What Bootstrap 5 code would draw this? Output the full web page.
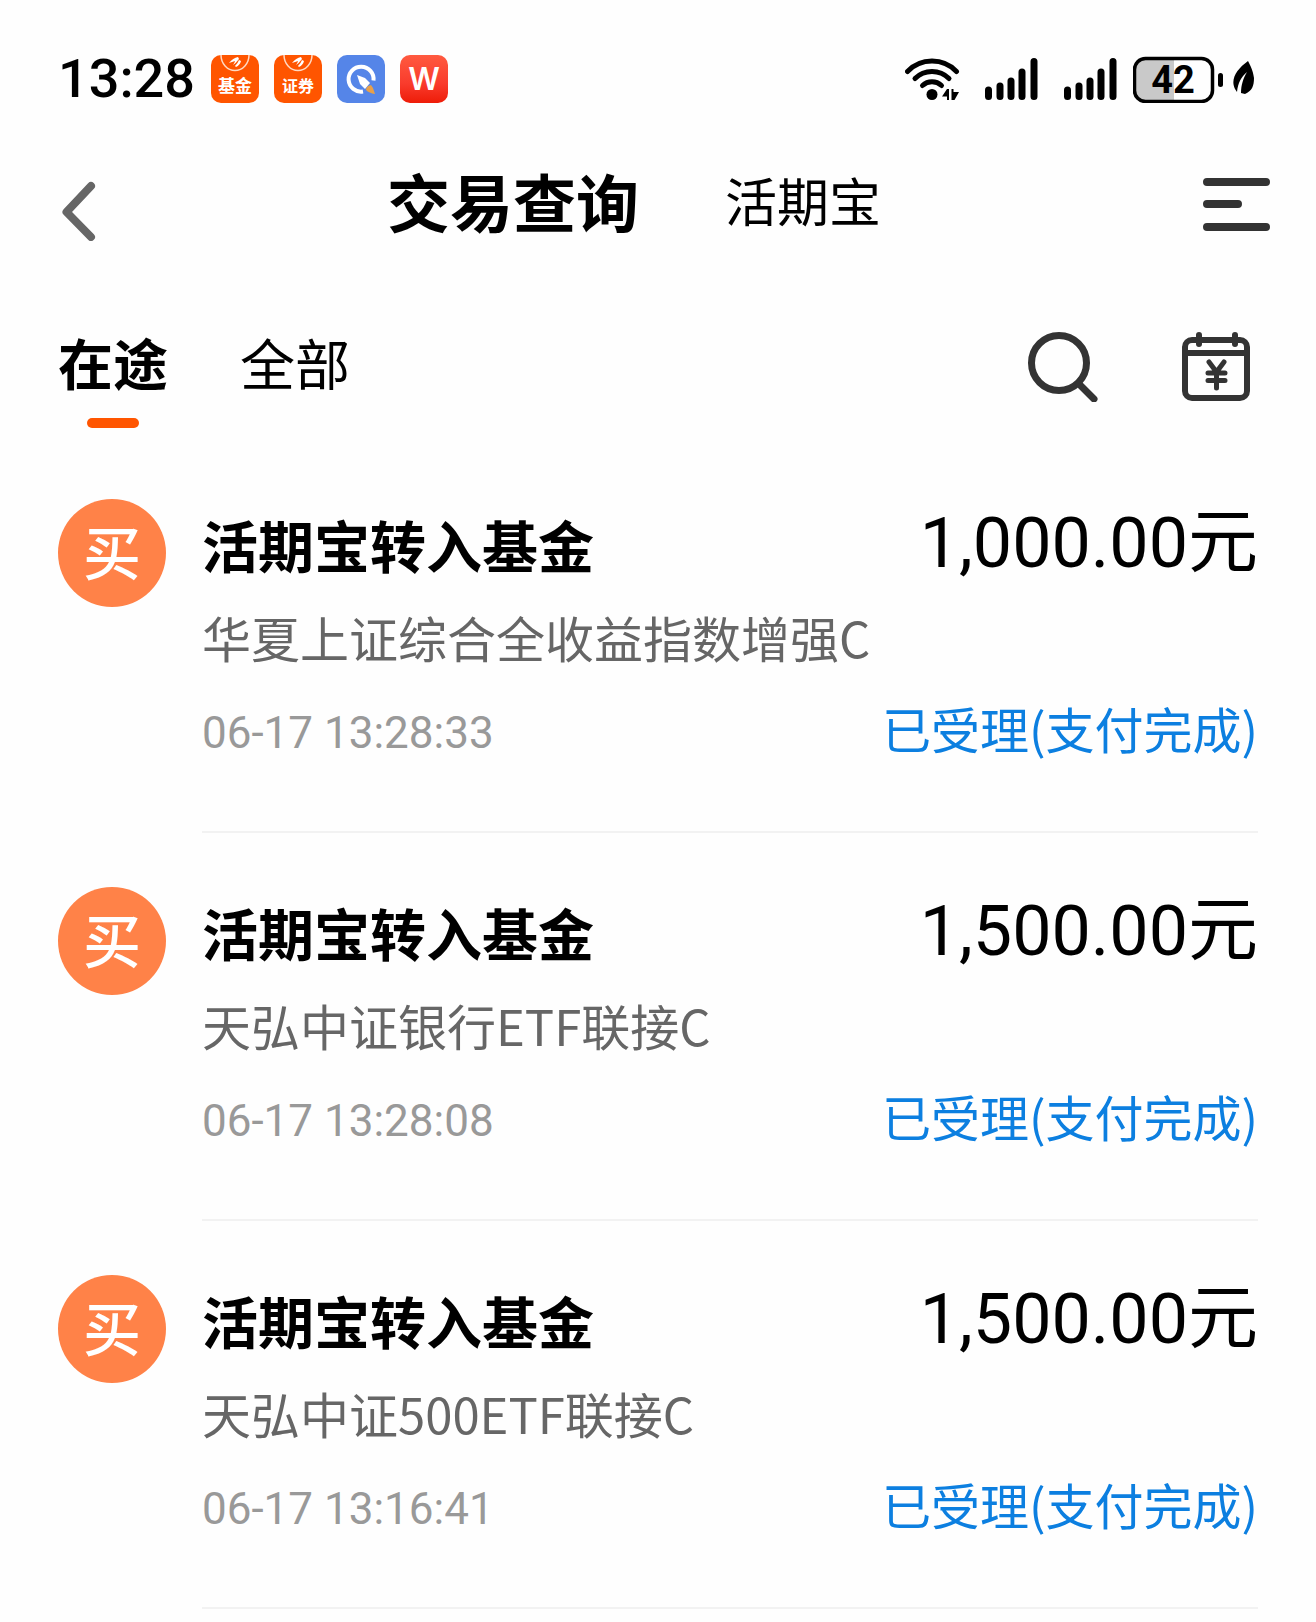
<!DOCTYPE html>
<html lang="zh-CN">
<head>
<meta charset="utf-8">
<meta name="viewport" content="width=device-width, initial-scale=1">
<title>交易查询</title>
<link href="https://cdn.jsdelivr.net/npm/bootstrap@5.3.0/dist/css/bootstrap.min.css" rel="stylesheet">
<style>
body { font-family: "Noto Sans CJK SC", sans-serif; background: #fefefe; color: #000; }
svg { display: block; flex: none; }
button { color: #333; background: none; border: 0; padding: 0; }
.page-x { padding-left: 58px; padding-right: 58px; }
.clock, .trade-sum, .trade-time, .battery-text { font-family: Roboto, "Noto Sans CJK SC", sans-serif; }

.status-bar { height: 128px; padding-top: 48px; }
.clock { font-size: 54px; line-height: 62px; font-weight: 500; }
.app-icons { gap: 15px; margin: 7px 0 0 16px; }
.sys-icons { margin-top: 7px; }

.top-nav { height: 140px; padding-left: 58px; padding-right: 44px; }
.back-btn { color: #666; padding-top: 26px; }
.menu-btn { padding-top: 12px; padding-left: 32px; }
.nav-titles { gap: 86px; padding-top: 4px; }
.nav-titles a { color: #000; text-decoration: none; font-size: 52px; line-height: 72px; }
.nav-titles a.active { font-size: 63px; font-weight: 700; }

.tab-row { padding-top: 57px; padding-bottom: 17px; }
.tab-list { gap: 72px; }
.tab-list button { color: #000; font-size: 55px; line-height: 72px; }
.tab-list button::after { content: ""; display: block; width: 52px; height: 10px; margin: 21px auto 0; border-radius: 5px; }
.tab-list button.active { font-weight: 700; }
.tab-list button.active::after { background: #ff5500; }
.tab-tools { gap: 82px; padding-top: 7px; margin-right: 7px; }

.trade { padding-top: 54px; gap: 36px; }
.buy-mark { width: 108px; height: 108px; padding-bottom: 6px; border-radius: 50%; background: #ff8248; color: #fff; font-size: 58px; line-height: 58px; font-weight: 500; flex: none; }
.trade-body { padding-top: 7px; padding-bottom: 65px; border-bottom: 2px solid #f2f2f2; }
.trade-title { font-size: 56px; line-height: 76px; font-weight: 700; }
.trade-sum { font-size: 70px; line-height: 74px; }
.trade-fund { font-size: 49px; line-height: 64px; margin-top: 23px; color: #666; }
.trade-foot { margin-top: 31px; }
.trade-time { font-size: 44px; line-height: 66px; color: #999; }
.trade-state { font-size: 49px; line-height: 56px; color: #0c7fe0; }
</style>
</head>
<body>
<header>
  <div class="status-bar page-x d-flex justify-content-between align-items-start">
    <div class="d-flex align-items-start">
      <div class="clock">13:28</div>
      <div class="app-icons d-flex">
        <svg width="48" height="48" viewBox="0 0 48 48"><rect width="48" height="48" rx="10" fill="#ff5500"/><path d="M10 0a14 15.500 0 0 0 28 0" fill="none" stroke="#ffd9c2" stroke-width="1.500"/><path d="M18 8Q22 3 27 2l1 2Q25 8 22 10 24 7 24 6 21 7 18 8zM28 5l2 1Q29 10 25 12L24 11Q27 8 28 5z" fill="#fff"/><text x="24" y="37" text-anchor="middle" font-size="17" font-weight="700" fill="#fff">基金</text></svg>
        <svg width="48" height="48" viewBox="0 0 48 48"><rect width="48" height="48" rx="10" fill="#ff5500"/><path d="M10 0a14 15.500 0 0 0 28 0" fill="none" stroke="#ffd9c2" stroke-width="1.500"/><path d="M18 8Q22 3 27 2l1 2Q25 8 22 10 24 7 24 6 21 7 18 8zM28 5l2 1Q29 10 25 12L24 11Q27 8 28 5z" fill="#fff"/><text x="24" y="37" text-anchor="middle" font-size="16" font-weight="700" fill="#fff">证券</text></svg>
        <svg width="48" height="48" viewBox="0 0 48 48"><rect width="48" height="48" rx="10" fill="#5585e8"/><path d="M26 36.500A12.500 12.500 0 1 1 36.500 25.500" fill="none" stroke="#fff" stroke-width="4"/><path d="M20 20l8 3 5 5-5 6-5-5z" fill="#fff"/><path d="M29 35q0-4 5-5l2 3 2 6q-6-1-9-4z" fill="#e8a04a"/></svg>
        <svg width="48" height="48" viewBox="0 0 48 48"><defs><linearGradient id="wg" x1="0" y1="0" x2="0" y2="1"><stop offset="0" stop-color="#ff5a40"/><stop offset=".6" stop-color="#f93b2c"/><stop offset="1" stop-color="#ee1c08"/></linearGradient></defs><rect width="48" height="48" rx="10" fill="url(#wg)"/><text x="24" y="35" text-anchor="middle" font-family="Inter, sans-serif" font-size="31" font-weight="600" fill="#fff">W</text></svg>
      </div>
    </div>
    <div class="sys-icons d-flex">
      <svg width="80" height="48" viewBox="0 0 80 48"><g fill="none" stroke="#000" stroke-width="5" stroke-linecap="round"><path d="M2.500 16.500a34 34 0 0 1 49 0"/><path d="M10 23.500a24 24 0 0 1 34 0"/><path d="M17.500 30.500a14 14 0 0 1 19 0"/></g><circle cx="27" cy="39.500" r="5.500"/><path d="M37 41.500l5-7.500h2v11h-2v-3.500zM46.500 34h2v3h5.500l-4.500 8h-3z"/></svg>
      <svg width="79" height="48" viewBox="0 0 79 48"><path d="M3.500 35v6.500M15 31v10.500M26 26v15.500M37 17v24.500M49 6.500v35" stroke="#000" stroke-width="7" stroke-linecap="round"/></svg>
      <svg width="69" height="48" viewBox="0 0 69 48"><path d="M3.500 35v6.500M15 31v10.500M26 26v15.500M37 17v24.500M49 6.500v35" stroke="#000" stroke-width="7" stroke-linecap="round"/></svg>
      <svg width="99" height="48" viewBox="0 0 99 48"><path d="M41 4H13Q2 4 2 15v20q0 11 11 11h28z" fill="#c9c9c9"/><rect x="1.500" y="3.500" width="78" height="43" rx="11" fill="none" stroke="#000" stroke-width="3.500"/><rect x="85" y="18" width="5" height="14" rx="2.500"/><text class="battery-text" x="40" y="38" text-anchor="middle" font-size="38" font-weight="700">42</text></svg>
      <svg width="26" height="48" viewBox="0 0 26 48"><path d="M16 6C5 14-2 24 3 34l2 3C6 28 9 22 15 17c-4 7-6 13-6 21l4 1C20 36 22 31 22 23 21 15 18 10 16 6z"/></svg>
    </div>
  </div>
  <nav class="top-nav d-flex justify-content-between align-items-center" aria-label="主导航">
    <button class="back-btn" type="button" aria-label="返回"><svg width="40" height="60" viewBox="0 0 40 60" fill="none" stroke="currentColor" stroke-width="8" stroke-linecap="round" stroke-linejoin="round"><path d="M33 5L8.500 31 33 56"/></svg></button>
    <div class="nav-titles d-flex align-items-center">
      <a class="active" href="#" aria-current="page">交易查询</a>
      <a href="#">活期宝</a>
    </div>
    <button class="menu-btn" type="button" aria-label="菜单"><svg width="70" height="54" viewBox="0 0 70 54" stroke="currentColor" stroke-width="8" stroke-linecap="round"><path d="M5 5h59M5 27h31M5 50h59"/></svg></button>
  </nav>
</header>
<main>
  <div class="tab-row page-x d-flex justify-content-between align-items-start">
    <div class="tab-list d-flex" role="tablist">
      <button class="active" type="button" role="tab" aria-selected="true">在途</button>
      <button type="button" role="tab" aria-selected="false">全部</button>
    </div>
    <div class="tab-tools d-flex">
      <button type="button" aria-label="搜索"><svg width="72" height="70" viewBox="0 0 72 70" fill="none" stroke="currentColor" stroke-width="7"><circle cx="32" cy="31" r="27.500"/><path d="M52 52l15 15" stroke-linecap="round"/></svg></button>
      <button type="button" aria-label="交易日历"><svg width="70" height="70" viewBox="0 0 70 70" fill="none" stroke="currentColor" stroke-width="6"><rect x="4" y="8" width="62" height="58" rx="7"/><path d="M4 21h62"/><path d="M18 3v9M54 3v9" stroke-linecap="round"/><path d="M28 30l7.500 10L43 30M35.500 40v16M27 41h17M27 48.500h17" stroke-width="5" stroke-linecap="round"/></svg></button>
    </div>
  </div>

  <section class="page-x" aria-label="交易记录">
    <article class="trade d-flex align-items-start">
      <div class="buy-mark d-flex align-items-center justify-content-center">买</div>
      <div class="trade-body flex-grow-1">
        <div class="d-flex justify-content-between align-items-start"><div class="trade-title">活期宝转入基金</div><div class="trade-sum">1,000.00元</div></div>
        <div class="trade-fund">华夏上证综合全收益指数增强C</div>
        <div class="trade-foot d-flex justify-content-between align-items-start"><time class="trade-time">06-17 13:28:33</time><span class="trade-state">已受理(支付完成)</span></div>
      </div>
    </article>
    <article class="trade d-flex align-items-start">
      <div class="buy-mark d-flex align-items-center justify-content-center">买</div>
      <div class="trade-body flex-grow-1">
        <div class="d-flex justify-content-between align-items-start"><div class="trade-title">活期宝转入基金</div><div class="trade-sum">1,500.00元</div></div>
        <div class="trade-fund">天弘中证银行ETF联接C</div>
        <div class="trade-foot d-flex justify-content-between align-items-start"><time class="trade-time">06-17 13:28:08</time><span class="trade-state">已受理(支付完成)</span></div>
      </div>
    </article>
    <article class="trade d-flex align-items-start">
      <div class="buy-mark d-flex align-items-center justify-content-center">买</div>
      <div class="trade-body flex-grow-1">
        <div class="d-flex justify-content-between align-items-start"><div class="trade-title">活期宝转入基金</div><div class="trade-sum">1,500.00元</div></div>
        <div class="trade-fund">天弘中证500ETF联接C</div>
        <div class="trade-foot d-flex justify-content-between align-items-start"><time class="trade-time">06-17 13:16:41</time><span class="trade-state">已受理(支付完成)</span></div>
      </div>
    </article>
  </section>
</main>
<script src="https://cdn.jsdelivr.net/npm/bootstrap@5.3.0/dist/js/bootstrap.bundle.min.js"></script>
</body>
</html>
